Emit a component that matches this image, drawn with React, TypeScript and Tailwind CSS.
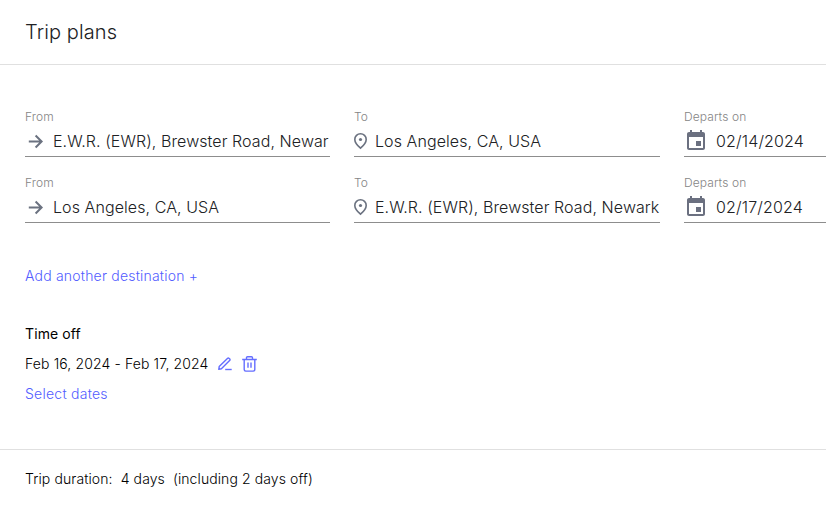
import type { ReactNode } from "react";

const legs = [
  { from: "E.W.R. (EWR), Brewster Road, Newar", to: "Los Angeles, CA, USA", date: "02/14/2024" },
  { from: "Los Angeles, CA, USA", to: "E.W.R. (EWR), Brewster Road, Newark", date: "02/17/2024" },
];

/* ── Icons ─────────────────────────────────── */
function ArrowIcon() {
  return (
    <svg width="20" height="20" viewBox="0 0 20 20" fill="none" stroke="#6b7280" strokeWidth="2">
      <path d="M3.8 10.5h12.6M10.6 4.5l6 6-6 6" />
    </svg>
  );
}

function PinIcon() {
  return (
    <svg width="14" height="18" viewBox="0 0 14 18" fill="none" stroke="#6b7280">
      <path d="M6.5 16.2C3.3 13.4.8 10.6.8 7.4a5.7 5.7 0 0 1 11.4 0c0 3.2-2.5 6-5.7 8.8z" strokeWidth="1.6" />
      <circle cx="6.5" cy="7.5" r="1.6" fill="#6b7280" stroke="none" />
    </svg>
  );
}

function CalendarIcon() {
  return (
    <svg width="24" height="24" viewBox="0 0 24 24" fill="#6b7080">
      <path d="M17 12h-5v5h5v-5zM16 1v2H8V1H6v2H5c-1.11 0-1.99.9-1.99 2L3 19c0 1.1.89 2 2 2h14c1.1 0 2-.9 2-2V5c0-1.1-.9-2-2-2h-1V1h-2zm3 18H5V8h14v11z" />
    </svg>
  );
}

function EditIcon() {
  return (
    <svg width="14" height="14" viewBox="0 0 14 14" fill="none" stroke="#656eff" strokeWidth="1.4" strokeLinejoin="round">
      <path d="M1.2 9.6 9.4 1.4a1.3 1.3 0 0 1 1.8 0l.4.4a1.3 1.3 0 0 1 0 1.8l-8.2 8.2-2.6.5z" />
      <path d="M7.2 12.5h6.5" />
    </svg>
  );
}

function TrashIcon() {
  return (
    <svg width="15" height="16" viewBox="0 0 15 16" fill="none" stroke="#656eff" strokeWidth="1.4">
      <path d="M.2 3.5h14.6M4.5 3.2V1.8q0-1 1-1h4q1 0 1 1v1.4M2.2 3.6v10q0 1.5 1.5 1.5h7.6q1.5 0 1.5-1.5v-10M6 6.5v5.2M9 6.5v5.2" />
    </svg>
  );
}

/* ── Underlined field ─────────────────────────────────── */
function Field({ label, icon, gap, children }: { label: string; icon: ReactNode; gap: string; children: string }) {
  return (
    <div className="h-12 min-w-0 border-b border-[#8d8d8d]">
      <div className="h-4 text-xs leading-4 tracking-[0.11px] text-[#858585] font-light">{label}</div>
      <div className={`flex h-[30px] items-center pt-[1px] ${gap}`}>
        <span className="shrink-0">{icon}</span>
        <span className="min-w-0 flex-1 overflow-hidden whitespace-nowrap text-base leading-6 font-light text-[#202124]">
          {children}
        </span>
      </div>
    </div>
  );
}

export default function App() {
  return (
    <main className="h-[505px] w-[826px] overflow-hidden bg-white font-['Inter',sans-serif] text-sm text-black">
      <header className="h-[65px] border-b border-[#e0e0e0] pt-[17px] pl-[25px]">
        <h1 className="text-xl leading-[30px] font-light tracking-[0.1px] text-[#202124]">Trip plans</h1>
      </header>

      <section className="h-[385px] border-b border-[#e0e0e0] pt-[44px] pl-[25px]">
        <div className="grid grid-cols-[305px_306px_200px] gap-x-6 gap-y-[18px] tracking-[0.08px]">
          {legs.map((leg) => (
            <div key={leg.date} className="contents">
              <Field label="From" icon={<ArrowIcon />} gap="gap-2">{leg.from}</Field>
              <Field label="To" icon={<PinIcon />} gap="gap-[7px]">{leg.to}</Field>
              <Field label="Departs on" icon={<CalendarIcon />} gap="gap-2 tracking-[0.15px]">{leg.date}</Field>
            </div>
          ))}
        </div>

        <button className="mt-[41px] block leading-6 font-light tracking-[0.2px] text-[#525cff]">
          Add another destination +
        </button>

        <h2 className="mt-[34px] leading-6 font-normal tracking-[0.1px]">Time off</h2>
        <div className="mt-[6px] flex h-6 items-center leading-6 font-light">
          <span className="tracking-[0.12px]">Feb 16, 2024 - Feb 17, 2024</span>
          <button className="ml-[10px]"><EditIcon /></button>
          <button className="ml-[10px]"><TrashIcon /></button>
        </div>
        <button className="mt-[6px] block leading-6 font-light tracking-[0.25px] text-[#525cff]">Select dates</button>
      </section>

      <footer className="flex gap-2 pt-[17px] pl-[25px] leading-6 font-light tracking-[0.1px]">
        <span>Trip duration:</span>
        <span>4 days</span>
        <span>(including 2 days off)</span>
      </footer>
    </main>
  );
}
